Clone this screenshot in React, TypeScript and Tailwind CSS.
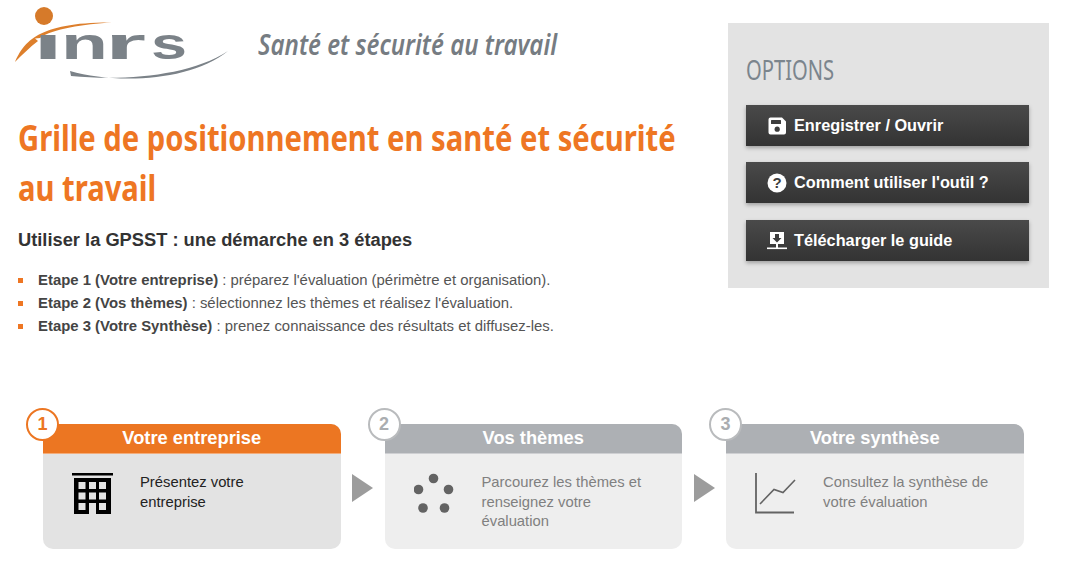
import React from 'react';

const ARIAL = "font-['Liberation_Sans',Arial,sans-serif]";
const CONDENSED = "font-['Noto_Sans','Liberation_Sans',sans-serif]";

const logoLetters = [
  { c: 'ı', x: 33, len: 30 },
  { c: 'n', x: 61, len: 47 },
  { c: 'r', x: 105, len: 41 },
  { c: 's', x: 151, len: 36 },
];

const Logo = () => (
  <svg width="230" height="87" viewBox="0 0 230 87" className="shrink-0">
    <circle cx="44" cy="16" r="9" fill="#d67a2a" />
    <path d="M15 62 C24 42 38 22 112 22.5 C84 24 52 29 40 38 L35 38.5 L38 41 C30 47 22 55 15 62 Z" fill="#dd7f2c" />
    {logoLetters.map(l => (
      <text key={l.c} x={l.x} y="59" fontFamily="Liberation Sans" fontWeight="700" fontSize="45" fill="#7b8288" textLength={l.len} lengthAdjust="spacingAndGlyphs">
        {l.c}
      </text>
    ))}
    <path d="M70 71 C115 84 190 82 228 51 C190 76 125 81 71 76 Z" fill="#7b8288" />
  </svg>
);

const SaveIcon = () => (
  <svg width="18" height="18" viewBox="0 0 18 18" fill="#fff">
    <path d="M2.5 0.5H14L18 4.5V15.5A2 2 0 0 1 16 17.5H2.5A2 2 0 0 1 0.5 15.5V2.5A2 2 0 0 1 2.5 0.5Z" />
    <rect x="3" y="3" width="10" height="4" rx="0.5" fill="#3d3d3d" />
    <circle cx="9.2" cy="12.2" r="2.6" fill="#3d3d3d" />
  </svg>
);

const HelpIcon = () => (
  <svg width="20" height="20" viewBox="0 0 20 20">
    <circle cx="10" cy="10" r="9.5" fill="#fff" />
    <text x="10" y="15.2" textAnchor="middle" fontFamily="Liberation Sans" fontWeight="700" fontSize="15" fill="#3d3d3d">?</text>
  </svg>
);

const DownloadIcon = () => (
  <svg width="20" height="20" viewBox="0 0 20 20" fill="#fff">
    <path d="M3 1H17V13H3Z" />
    <path d="M8 3H12V7H14.5L10 11.5L5.5 7H8Z" fill="#3d3d3d" />
    <rect x="9" y="13" width="2" height="4" />
    <rect x="0" y="16.5" width="20" height="1.6" />
  </svg>
);

const BuildingIcon = () => (
  <svg width="42" height="42" viewBox="0 0 42 42">
    <rect x="0" y="0" width="41" height="2.5" fill="#000" />
    <rect x="2" y="5" width="37" height="36" fill="#000" />
    {[9, 19.5, 30].map(y =>
      [6.5, 17, 27].map(x => (
        <rect key={x} x={x} y={y} width="7" height={y === 30 && x === 17 ? 11 : 7} fill="#e3e3e3" />
      ))
    )}
  </svg>
);

const DotsIcon = () => (
  <svg width="42" height="42" viewBox="0 0 42 42" fill="#636363">
    <circle cx="19.5" cy="5.5" r="4.8" />
    <circle cx="4.5" cy="16.5" r="4.8" />
    <circle cx="34.5" cy="16.5" r="4.8" />
    <circle cx="9" cy="35" r="4.8" />
    <circle cx="30.5" cy="35" r="4.8" />
  </svg>
);

const ChartIcon = () => (
  <svg width="42" height="42" viewBox="0 0 42 42" fill="none" stroke="#636363">
    <path d="M1 0V39.5H39" strokeWidth="1.8" />
    <path d="M5 31L19 16.5L28 19.5L40 7" strokeWidth="1.6" />
  </svg>
);

const steps = [
  { n: 1, title: 'Votre entreprise', text: 'Présentez votre entreprise', icon: <BuildingIcon />, active: true },
  { n: 2, title: 'Vos thèmes', text: 'Parcourez les thèmes et renseignez votre évaluation', icon: <DotsIcon /> },
  { n: 3, title: 'Votre synthèse', text: 'Consultez la synthèse de votre évaluation', icon: <ChartIcon /> },
];

const buttons = [
  { label: 'Enregistrer / Ouvrir', icon: <SaveIcon /> },
  { label: "Comment utiliser l'outil ?", icon: <HelpIcon /> },
  { label: 'Télécharger le guide', icon: <DownloadIcon /> },
];

const intro = [
  ['Etape 1 (Votre entreprise)', " : préparez l'évaluation (périmètre et organisation)."],
  ['Etape 2 (Vos thèmes)', " : sélectionnez les thèmes et réalisez l'évaluation."],
  ['Etape 3 (Votre Synthèse)', ' : prenez connaissance des résultats et diffusez-les.'],
];

export default function App() {
  return (
    <div className={`${ARIAL} w-[1068px] h-[569px] overflow-hidden bg-white`}>
      <div className="flex">
        {/* Left column */}
        <div className="w-[728px] shrink-0 pl-[18px]">
          <div className="flex -ml-[18px]">
            <Logo />
            <p className={`${CONDENSED} ml-[28px] mt-[27px] text-[29px] leading-[34px] italic font-semibold text-[#767c82] whitespace-nowrap origin-left scale-x-[0.83]`}>
              Santé et sécurité au travail
            </p>
          </div>
          <h1 className={`${CONDENSED} mt-[25px] text-[36.5px] leading-[50px] font-bold text-[#ee7623] whitespace-nowrap origin-left scale-x-[0.8]`}>
            Grille de positionnement en santé et sécurité
            <br />
            au travail
          </h1>
          <h2 className="mt-[16px] text-[18.3px] leading-[24px] font-bold text-[#333]">
            Utiliser la GPSST : une démarche en 3 étapes
          </h2>
          <ul className="mt-[17px]">
            {intro.map(([bold, rest]) => (
              <li key={bold} className="flex items-center h-[23px] text-[14.9px] text-[#555]">
                <span className="w-[5px] h-[5px] mr-[15px] bg-[#ee7623]" />
                <span>
                  <b className="text-[#444]">{bold}</b>
                  {rest}
                </span>
              </li>
            ))}
          </ul>
        </div>

        {/* Options */}
        <div className="mt-[23px] w-[321px] h-[265px] shrink-0 bg-[#e3e3e3] pl-[18px]">
          <h3 className={`${CONDENSED} mt-[28px] text-[28px] leading-[36px] text-[#7b858d] origin-left scale-x-[0.72]`}>OPTIONS</h3>
          <div className="mt-[18px] w-[283px] flex flex-col gap-[16px]">
            {buttons.map(b => (
              <div
                key={b.label}
                className="flex items-center h-[41px] last:mt-px pl-[21px] bg-gradient-to-b from-[#4a4a4a] to-[#333] shadow-[0_2px_4px_rgba(0,0,0,0.3)] text-[16.3px] font-bold text-white"
              >
                <span className="flex justify-center w-[20px] mr-[7px]">{b.icon}</span>
                {b.label}
              </div>
            ))}
          </div>
        </div>
      </div>

      {/* Steps */}
      <div className="mt-[86px] ml-[43px] flex">
        {steps.map((s, i) => (
          <React.Fragment key={s.n}>
            {i > 0 && (
              <div className="w-[44px] flex justify-center pt-[50px]">
                <span className="w-0 h-0 border-y-[14px] border-y-transparent border-l-[21px] border-l-[#9c9c9c]" />
              </div>
            )}
            <div className={`relative w-[297.5px] h-[125px] rounded-[10px] ${s.active ? 'bg-[#e3e3e3]' : 'bg-[#eeeeee]'}`}>
              <div
                className={`h-[30px] rounded-t-[10px] border-b border-white/40 text-center text-[18.3px] leading-[28px] font-bold text-white ${s.active ? 'bg-[#ec7622]' : 'bg-[#adb0b4]'}`}
              >
                {s.title}
              </div>
              <span
                className={`absolute -left-[17px] -top-[16px] flex items-center justify-center w-[33px] h-[33px] rounded-full border-2 bg-white text-[18px] font-bold ${s.active ? 'border-[#ec7622] text-[#ec7622]' : 'border-[#b9bbbd] text-[#aaadb0]'}`}
              >
                {s.n}
              </span>
              <div className="flex pl-[29px] pt-[19px]">
                <span className="shrink-0 w-[42px] h-[42px]">{s.icon}</span>
                <p className={`ml-[26px] w-[172px] text-[14.8px] leading-[19.5px] ${s.active ? 'text-[#222]' : 'text-[#808080]'}`}>
                  {s.text}
                </p>
              </div>
            </div>
          </React.Fragment>
        ))}
      </div>
    </div>
  );
}
